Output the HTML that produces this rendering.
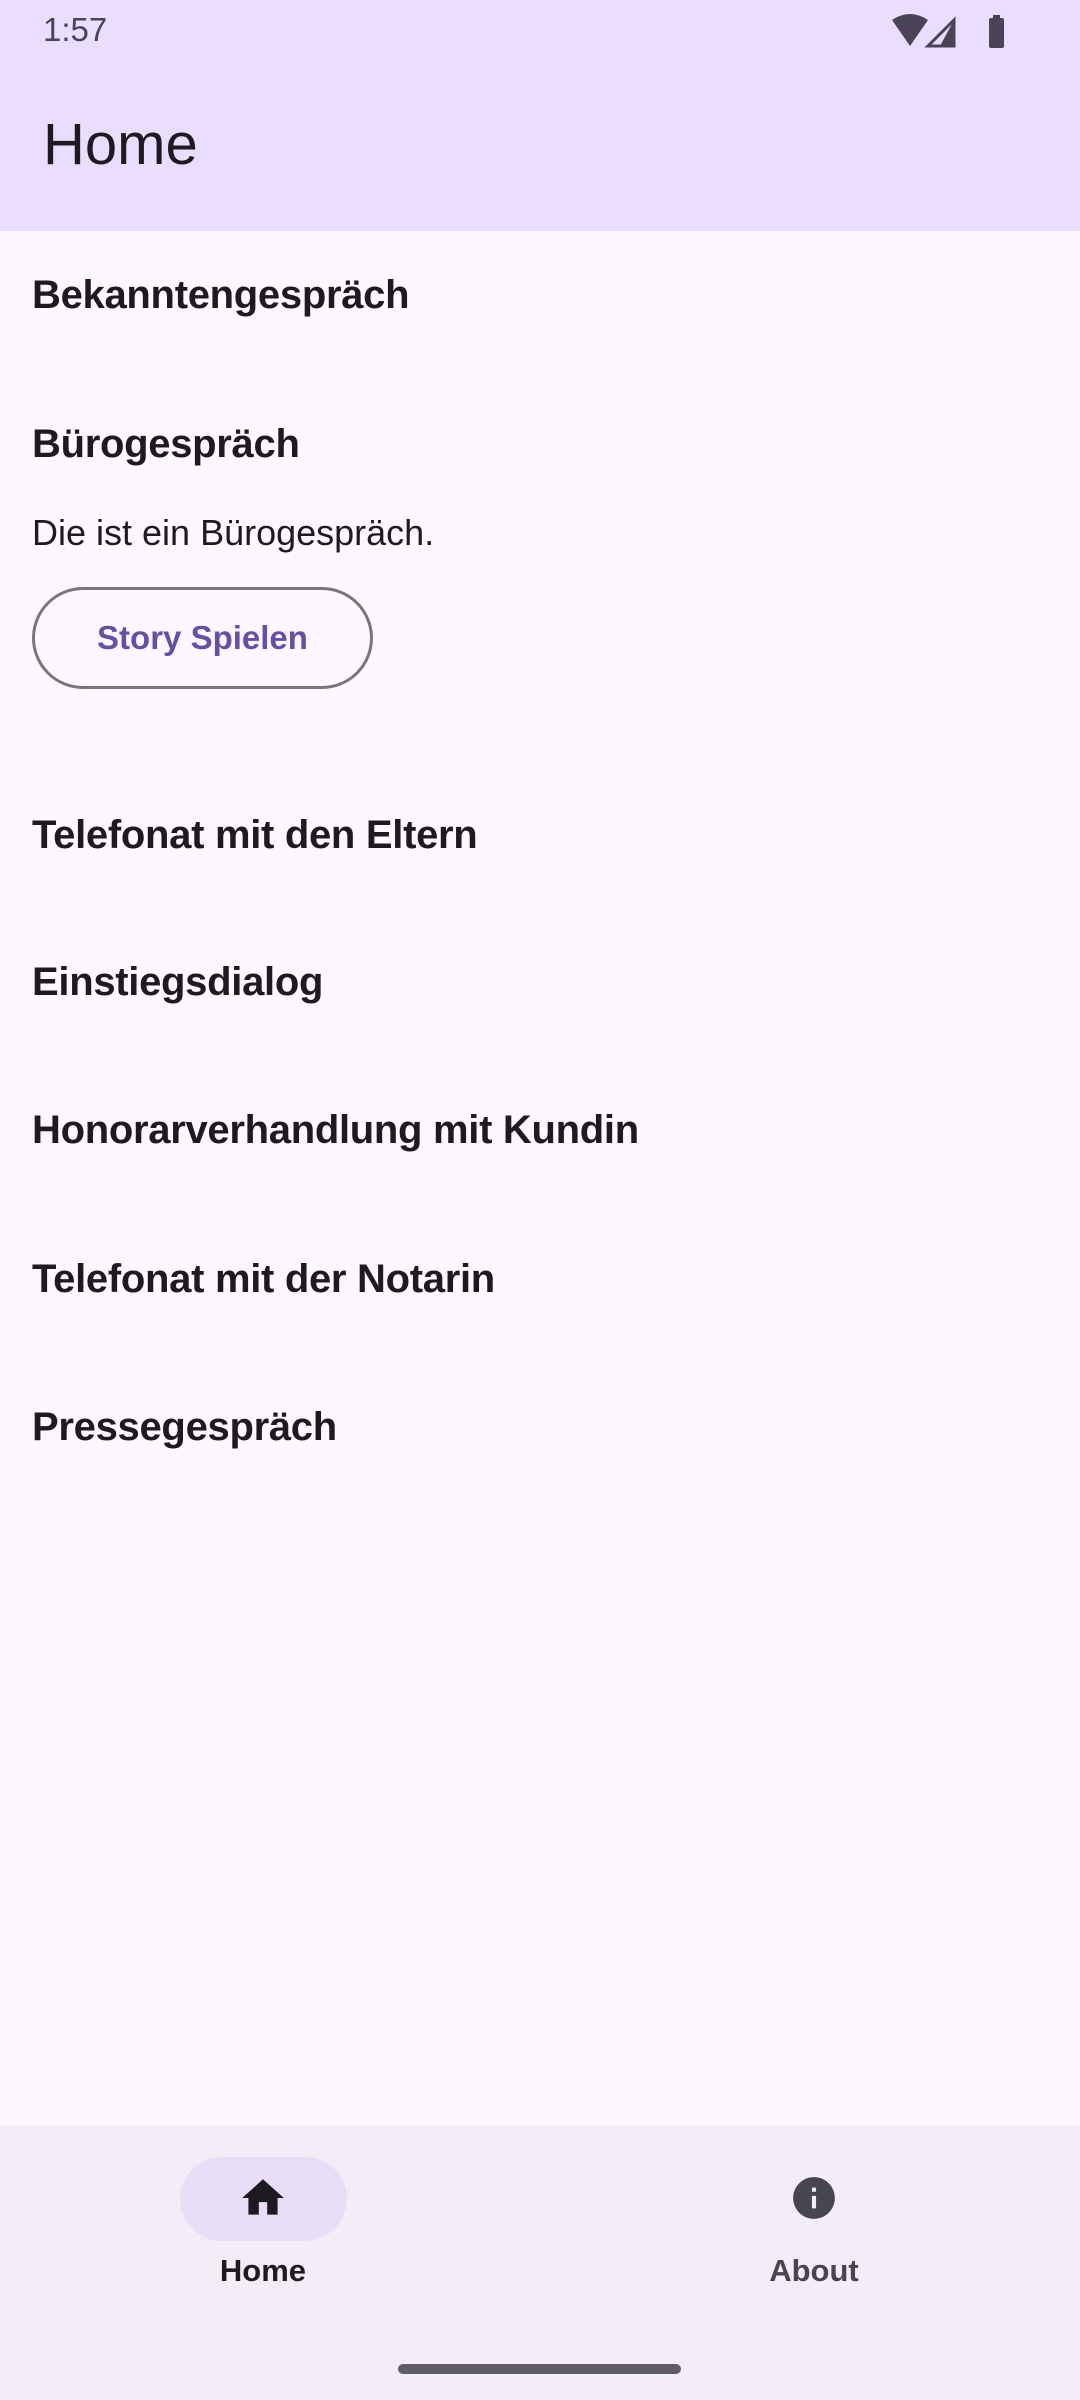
<!DOCTYPE html>
<html><head><meta charset="utf-8"><style>
*{margin:0;padding:0;box-sizing:border-box}
body{width:1080px;height:2400px;background:#FEF7FF;font-family:"Liberation Sans",sans-serif;position:relative;overflow:hidden;color:#1D1B20}
.abs{position:absolute}
.top{left:0;top:0;width:1080px;height:231px;background:#EADDFF}
.t{left:32px;font-size:40px;font-weight:bold;line-height:50px;letter-spacing:-0.3px}
</style></head><body>
<div class="abs top"></div>
<div class="abs" style="left:43px;top:10px;font-size:33px;color:#4a4458;line-height:40px">1:57</div>
<svg class="abs" style="left:890px;top:12px" width="120" height="40" viewBox="0 0 120 40">
<path d="M2 8 Q20 -4 38 8 L20 34 Z" fill="#4a4458"/>
<path d="M64 8 L64 34 L38 34 Z" fill="none" stroke="#4a4458" stroke-width="3"/>
<path d="M64 8 L64 34 L50 34 Z" fill="#4a4458"/>
<rect x="99" y="6" width="15" height="30" rx="2" fill="#4a4458"/><rect x="103" y="3" width="7" height="4" fill="#4a4458"/>
</svg>
<div class="abs" style="left:43px;top:113px;font-size:58px;line-height:64px">Home</div>

<div class="abs t" style="top:270px">Bekanntengespräch</div>
<div class="abs t" style="top:419px">Bürogespräch</div>
<div class="abs" style="left:32px;top:511px;font-size:36px;line-height:44px">Die ist ein Bürogespräch.</div>
<div class="abs" style="left:32px;top:587px;width:341px;height:102px;border:3px solid #79747E;border-radius:51px;color:#6750A4;font-size:33px;font-weight:bold;line-height:96px;text-align:center">Story Spielen</div>
<div class="abs t" style="top:810px">Telefonat mit den Eltern</div>
<div class="abs t" style="top:957px">Einstiegsdialog</div>
<div class="abs t" style="top:1105px">Honorarverhandlung mit Kundin</div>
<div class="abs t" style="top:1254px">Telefonat mit der Notarin</div>
<div class="abs t" style="top:1402px">Pressegespräch</div>

<div class="abs" style="left:0;top:2125px;width:1080px;height:275px;background:#F3EDF7"></div>
<div class="abs" style="left:180px;top:2157px;width:167px;height:84px;border-radius:42px;background:#E8DEF8"></div>
<svg class="abs" style="left:238px;top:2173px" width="50" height="50" viewBox="0 0 24 24"><path d="M10 20v-6h4v6h5v-8h3L12 3 2 12h3v8z" fill="#1D1B20"/></svg>
<svg class="abs" style="left:789px;top:2173px" width="50" height="50" viewBox="0 0 24 24"><path d="M12 2C6.48 2 2 6.48 2 12s4.48 10 10 10 10-4.48 10-10S17.52 2 12 2zm1 15h-2v-6h2v6zm0-8h-2V7h2v2z" fill="#49454F"/></svg>
<div class="abs" style="left:163px;top:2252px;width:200px;text-align:center;font-size:31px;font-weight:bold;line-height:38px;color:#1D1B20">Home</div>
<div class="abs" style="left:714px;top:2252px;width:200px;text-align:center;font-size:31px;font-weight:bold;line-height:38px;color:#49454F">About</div>
<div class="abs" style="left:398px;top:2364px;width:283px;height:10px;border-radius:5px;background:#615D66"></div>
</body></html>
